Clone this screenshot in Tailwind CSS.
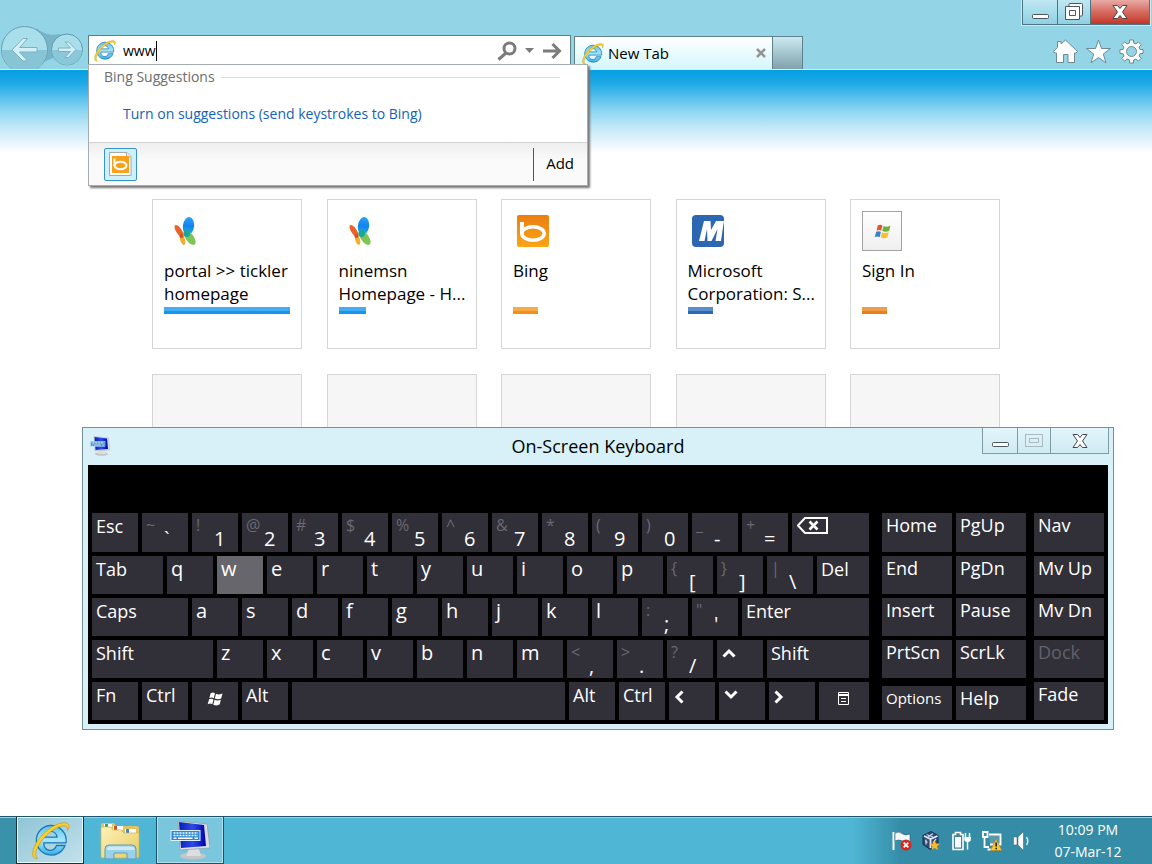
<!DOCTYPE html>
<html lang="en">
<head>
    <meta charset="UTF-8">
    <meta name="viewport" content="width=device-width, initial-scale=1.0">
    <title>New Tab</title>
    <script src="https://cdn.jsdelivr.net/npm/@tailwindcss/browser@4"></script>
</head>
<body class="relative flex h-screen flex-col overflow-hidden bg-white font-['Open_Sans',sans-serif] text-sm text-black">

    <!-- shared icons -->
    <svg class="absolute size-0" aria-hidden="true">
        <defs>
            <linearGradient id="ieBlue" x1="0" y1="0" x2="0" y2="1">
                <stop offset="0" stop-color="#5cc4ee"/>
                <stop offset=".5" stop-color="#a5e6fb"/>
                <stop offset="1" stop-color="#37aee6"/>
            </linearGradient>
            <linearGradient id="bingOrange" x1="0" y1="0" x2="0" y2="1">
                <stop offset="0" stop-color="#e97e12"/>
                <stop offset="1" stop-color="#fda516"/>
            </linearGradient>
            <linearGradient id="folderYellow" x1="0" y1="0" x2="1" y2="1">
                <stop offset="0" stop-color="#fdf2b8"/>
                <stop offset="1" stop-color="#e9cb62"/>
            </linearGradient>
            <linearGradient id="screenBlue" x1="0" y1="0" x2="1" y2="0">
                <stop offset="0" stop-color="#0a1fb0"/>
                <stop offset=".5" stop-color="#2c4be6"/>
                <stop offset="1" stop-color="#0000a8"/>
            </linearGradient>
            <linearGradient id="msnBlue" x1="0" y1="0" x2="0" y2="1">
                <stop offset="0" stop-color="#2ba4f5"/>
                <stop offset=".5" stop-color="#1183ee"/>
                <stop offset="1" stop-color="#22b6d6"/>
            </linearGradient>
        </defs>
        <symbol id="ie" viewBox="0 0 40 40">
            <path d="M20.500 5.500A14.800 14.800 0 1 0 35 25.500H26.500A6.500 6.500 0 0 1 13.800 22.800H36A15 15 0 0 0 20.500 5.500ZM13.900 17.200A6.600 6.600 0 0 1 27 17.200Z" fill="url(#ieBlue)" stroke="#1b78b4" stroke-width="1.300" fill-rule="evenodd"/>
            <path d="M7.500 38.500C0 39.500 1.500 28 10 17.500 19 6.500 32 .5 37.500 3.500 39.800 5 39 8 37.500 10.500 37.800 7 36.500 5.600 33.500 5.800 27 6.300 17.500 13 11.500 21 5.500 29 4 35.500 7.500 38.500Z" fill="#fbcf2f" stroke="#c99a12" stroke-width=".7"/>
        </symbol>
        <symbol id="bing" viewBox="0 0 32 32">
            <rect width="32" height="32" rx="2" fill="url(#bingOrange)"/>
            <path d="M5 7V19" stroke="#fff" stroke-width="4" fill="none"/>
            <ellipse cx="16" cy="18.500" rx="11.200" ry="6.800" fill="none" stroke="#fff" stroke-width="3.500"/>
        </symbol>
        <symbol id="msn" viewBox="0 0 22 28">
            <ellipse cx="5" cy="14" rx="2.800" ry="7" transform="rotate(-33 5 14)" fill="#e8622a"/>
            <ellipse cx="8.500" cy="22.500" rx="2.400" ry="5.600" transform="rotate(-16 8.500 22.500)" fill="#f3ae30"/>
            <ellipse cx="14.500" cy="9" rx="5.600" ry="9" transform="rotate(7 14.500 9)" fill="url(#msnBlue)"/>
            <ellipse cx="16" cy="21" rx="4" ry="8" transform="rotate(-35 16 21)" fill="#7fc456"/>
            <ellipse cx="12.700" cy="16.500" rx="3.300" ry="3.600" fill="#17a898"/>
            <circle cx="7.500" cy="19" r="2" fill="#dc4a26"/>
        </symbol>
        <symbol id="winflag" viewBox="0 0 16 14">
            <path d="M3.600 1.200C5.200.3 6.700.4 8 1.300L6.800 6.300C5.500 5.400 4 5.300 2.400 6.200Z" class="fill-[var(--a,#fff)]"/>
            <path d="M9 1.800C10.700 2.700 12.500 2.700 15.500 1.500L14.200 6.600C12 7.700 9.800 7.500 7.800 6.600Z" class="fill-[var(--b,#fff)]"/>
            <path d="M2.100 7.300C3.700 6.400 5.300 6.500 6.500 7.400L5.300 12.300C4 11.400 2.500 11.400.7 12.200Z" class="fill-[var(--c,#fff)]"/>
            <path d="M7.500 7.800C9.400 8.700 11.500 8.700 13.900 7.700L12.600 12.600C10.500 13.700 8.300 13.600 6.300 12.700Z" class="fill-[var(--d,#fff)]"/>
        </symbol>
        <symbol id="osk" viewBox="0 0 40 40">
            <ellipse cx="23" cy="36" rx="13" ry="3.500" fill="#c4c6c8"/>
            <path d="M19 29H29L31 36H16Z" fill="#dedede"/>
            <path d="M8 1L37 4 40 28 10 30Z" fill="#d9dde2" stroke="#8b929c" stroke-width=".6"/>
            <path d="M9 2L34 5 36 26 11 28Z" fill="url(#screenBlue)"/>
            <rect x="1" y="10.500" width="29" height="10" fill="#2c87d2" stroke="#d9f0ff"/>
            <path d="M3.500 13H28M3.500 15.500H28" stroke="#fff" stroke-width="1.500" stroke-dasharray="2 1"/>
            <path d="M3.500 18.200H6.500M8 18.200H22.500M24.500 18.200H28" stroke="#fff" stroke-width="1.500"/>
        </symbol>
    </svg>

    <!-- browser frame -->
    <header class="relative flex h-[70px] shrink-0 items-end overflow-hidden border-b border-[#d5f1f8] bg-[#93d4e6]">
        <svg class="h-[43px] w-[88px] shrink-0" viewBox="0 0 88 43">
            <path d="M36 2C44 8 50 10 60 8L70 24 44 36Z" fill="#76b4c8"/>
            <circle cx="24.500" cy="23.500" r="23" fill="#a9deeb" stroke="#6a9fb0"/>
            <path d="M2 24A22.500 22.500 0 0 0 47 24Z" fill="#86c4d6"/>
            <circle cx="67" cy="23.500" r="15.500" fill="#a9deeb" stroke="#5f9aae"/>
            <path d="M52 24A15 15 0 0 0 82 24Z" fill="#8ac8d9"/>
            <path d="M12 24L23 12.500H27.500L19.500 21.500H37V26H19.500L27.500 35H23Z" fill="#d4f0f7" stroke="#7fb0c0"/>
            <path d="M76 23.500L68.500 16H65L70.500 22H58.500V25.500H70.500L65 31.500H68.500Z" fill="#d4f0f7" stroke="#7fb0c0"/>
        </svg>
        <div class="mb-[3px] flex h-[31px] w-[483px] items-center border border-[#5f7f8a] bg-white">
            <svg class="ml-1 size-[23px]"><use href="#ie"/></svg>
            <input type="text" aria-label="Address" value="www" class="ml-[7px] field-sizing-content outline-none">
            <span class="h-5 w-px bg-black"></span>
            <div class="mr-2 ml-auto flex items-center gap-2 text-[#7b7b7b]">
                <button aria-label="Search"><svg class="size-5" viewBox="0 0 20 20" fill="none" stroke="currentColor" stroke-width="3"><circle cx="12.500" cy="7.500" r="5.500"/><path d="M9 12L1.500 18.500"/></svg></button>
                <button aria-label="Show address list"><svg class="h-[5px] w-[9px]" viewBox="0 0 9 5" fill="currentColor"><path d="M0 0H9L4.500 5Z"/></svg></button>
                <button aria-label="Go"><svg class="h-4 w-5" viewBox="0 0 20 16" fill="none" stroke="currentColor" stroke-width="3"><path d="M1 8H17M10.500 1L17.500 8 10.500 15"/></svg></button>
            </div>
        </div>
        <div class="ml-[3px] flex h-[33px] w-[199px] items-center border border-b-0 border-[#5f7f8a] bg-linear-to-b from-white to-[#d3f6fc] pl-1.5">
            <svg class="size-[23px]"><use href="#ie"/></svg>
            <span class="mt-0.5 ml-1 text-[15px]">New Tab</span>
            <button aria-label="Close tab" class="mr-1.5 ml-auto"><svg class="size-[10px]" viewBox="0 0 10 10" stroke="#949494" stroke-width="2.500"><path d="M1 1L9 9M9 1L1 9"/></svg></button>
        </div>
        <button aria-label="New tab" class="h-[33px] w-[30px] border border-b-0 border-l-0 border-[#5f7f8a] bg-linear-to-b from-[#cdeaf2] to-[#7fa2ab]"></button>
        <nav class="mr-2 mb-[5px] ml-auto flex gap-2 text-white">
            <button aria-label="Home"><svg class="size-[25px]" viewBox="0 0 25 25" fill="currentColor" stroke="#6c8b96"><path d="M12.500 1L24.500 12.500 23 14H21.500V23.500H15V15.500H10.500V23.500H3.500V14H2L.5 12.500 4.500 8.500V2.500H8V5Z"/></svg></button>
            <button aria-label="Favorites"><svg class="size-[25px]" viewBox="0 0 25 25" fill="currentColor" stroke="#6c8b96"><path d="M12.500 1L15.500 9.500H24.500L17.300 15 20 23.800 12.500 18.500 5 23.800 7.700 15 .5 9.500H9.500Z"/></svg></button>
            <button aria-label="Tools"><svg class="size-[25px]" viewBox="0 0 25 25" fill="currentColor" stroke="#6c8b96"><path fill-rule="evenodd" d="M10.500 1H14.500V4L17 5 19.300 2.800 22.200 5.700 20 8 21 10.500H24V14.500H21L20 17 22.200 19.300 19.300 22.200 17 20 14.500 21V24H10.500V21L8 20 5.700 22.200 2.800 19.300 5 17 4 14.500H1V10.500H4L5 8 2.800 5.700 5.700 2.800 8 5 10.500 4ZM12.500 7.500A5 5 0 1 0 12.500 17.500 5 5 0 1 0 12.500 7.500Z"/></svg></button>
        </nav>
        <div class="absolute top-0 right-[2px] flex h-[25px] border border-t-0 border-[#4f7482] outline outline-[#c8ebf4]">
            <button aria-label="Minimize" class="flex w-[35px] items-center justify-center border-r border-[#4f7482] bg-linear-to-b from-[#bfe8f2] to-[#8fd0e2]"><svg class="mt-2 h-[5px] w-[17px]" viewBox="0 0 17 5"><rect x=".5" y=".5" width="16" height="4" rx="1" fill="#fff" stroke="#4a5660"/></svg></button>
            <button aria-label="Restore" class="flex w-[33px] items-center justify-center border-r border-[#4f7482] bg-linear-to-b from-[#bfe8f2] to-[#8fd0e2]"><svg class="mb-0.5 h-[17px] w-[18px]" viewBox="0 0 18 17" fill="#fff" stroke="#4a5660"><rect x="4" y=".5" width="13.500" height="12.500" rx="1"/><path fill-rule="evenodd" d="M.5 3.500H14.500V16.500H.5ZM4.500 7.500V12.500H10.500V7.500Z"/></svg></button>
            <button aria-label="Close" class="flex w-[58px] items-center justify-center bg-linear-to-b from-[#e8aaa5] via-[#d5695f] to-[#c23526]"><svg class="h-[14px] w-4" viewBox="0 0 16 14" fill="#fff" stroke="#4a4450"><path d="M1 .5H5.500L8 3.500 10.500 .5H15L10.500 7 15 13.500H10.500L8 10.500 5.500 13.500H1L5.500 7Z"/></svg></button>
        </div>
    </header>

    <!-- page -->
    <main class="flex-1 overflow-hidden bg-[linear-gradient(#049fe3_0px,#20aae6_14px,#8ad4f2_40px,#c9ebf9_60px,#fff_83px)] pt-[129px]">
        <div class="mx-auto flex max-w-[848px] flex-col gap-[25px]">
            <div id="sites" class="flex justify-between"></div>
            <div class="flex justify-between *:h-[150px] *:w-[150px] *:border *:border-[#d6d6d6] *:bg-[#f6f6f6]">
                <div></div><div></div><div></div><div></div><div></div>
            </div>
        </div>
    </main>

    <!-- address bar suggestions -->
    <section class="absolute top-[64px] left-[88px] w-[500px] border border-[#a5adb0] bg-white shadow-[2px_2px_2px_#777]">
        <h2 class="flex h-6 items-center gap-1.5 pr-[27px] pl-[15px] text-[#6d6d6d] after:h-px after:flex-1 after:bg-[#dcdcdc]">Bing Suggestions</h2>
        <div class="flex h-[53px] items-center pl-[34px]">
            <a href="#" class="pb-1 text-[#1362ba]">Turn on suggestions (send keystrokes to Bing)</a>
        </div>
        <div class="flex h-[43px] items-center border-t border-[#d2d2d2] bg-linear-to-b from-[#eee] to-[#fafafa] to-40% pr-[13px] pl-[15px]">
            <button aria-label="Bing" class="flex size-[33px] items-center justify-center rounded-xs border border-[#3594c4] bg-[#d0effb]">
                <svg class="h-6 w-[23px]" viewBox="0 0 23 24"><path d="M.5 .5H18L22 4.500V23.500H.5Z" fill="#fff" stroke="#a3a8aa"/><path d="M17.500 .5V5H22" fill="#eee" stroke="#a3a8aa"/><rect x="3" y="4" width="17" height="17" fill="#f9a01b"/><path d="M5.500 6.500V14" stroke="#fff" stroke-width="2"/><ellipse cx="11.500" cy="13.500" rx="6" ry="3.800" fill="none" stroke="#fff" stroke-width="2"/></svg>
            </button>
            <span class="mr-3 ml-auto h-[33px] w-px bg-[#555]"></span>
            <button class="text-[15px]">Add</button>
        </div>
    </section>

    <!-- on-screen keyboard window -->
    <section class="absolute top-[427px] right-[38px] left-[82px] border border-[#74909b] bg-[#d8f1f8] px-[5px] pb-[5px]">
        <div class="relative flex h-[37px] items-center justify-center">
            <svg class="absolute top-2 left-0.5 size-5"><use href="#osk"/></svg>
            <h1 class="pb-0.5 text-lg">On-Screen Keyboard</h1>
            <div class="absolute top-0 -right-px flex h-[26px] border border-t-0 border-[#7f9ba5] bg-linear-to-b from-[#e2f6fb] to-[#cfeaf2]">
                <button aria-label="Minimize" class="flex w-[35px] items-center justify-center border-r border-[#7f9ba5]"><svg class="mt-2 h-[5px] w-[17px]" viewBox="0 0 17 5"><rect x=".5" y=".5" width="16" height="4" rx="1" fill="#fff" stroke="#4a5660"/></svg></button>
                <button aria-label="Maximize" disabled class="flex w-[33px] items-center justify-center border-r border-[#7f9ba5]"><svg class="h-[13px] w-[18px]" viewBox="0 0 18 13" fill="none" stroke="#a9bac0"><rect x=".5" y=".5" width="17" height="12"/><rect x="4.500" y="4.500" width="9" height="4"/></svg></button>
                <button aria-label="Close" class="flex w-[57px] items-center justify-center"><svg class="h-[14px] w-4" viewBox="0 0 16 14" fill="#fff" stroke="#4a4450"><path d="M1 .5H5.500L8 3.500 10.500 .5H15L10.500 7 15 13.500H10.500L8 10.500 5.500 13.500H1L5.500 7Z"/></svg></button>
            </div>
        </div>
        <div class="flex bg-black px-1 pt-[48px] pb-1">
            <div id="keys" class="flex flex-1 flex-col gap-1"></div>
            <div id="navKeys" class="ml-[13px] grid w-[144px] grid-cols-2 grid-rows-[39px_38px_38px_38px_38px] gap-1"></div>
            <div id="sideKeys" class="ml-2 grid w-[70px] grid-rows-[39px_38px_38px_38px_38px] gap-1"></div>
        </div>
    </section>

    <!-- taskbar -->
    <footer class="flex h-12 shrink-0 border-t border-[#1f5468] bg-[linear-gradient(90deg,#3a91aa_16px,#50b6d5_16px,#50b6d5_calc(100%-300px),#348ca6_calc(100%-250px))] inset-shadow-[0_1px_#8fd3e6]">
        <button aria-label="Internet Explorer" class="ml-4 flex w-[68px] items-center justify-center border border-t-0 border-[#16323d] bg-linear-to-br from-[#8fc4d6] to-[#c3e2ec] inset-ring inset-ring-[#e6f6fa]"><svg class="size-10"><use href="#ie"/></svg></button>
        <button aria-label="File Explorer" class="flex w-[72px] items-center justify-center">
            <svg class="h-[38px] w-10" viewBox="0 0 40 38">
                <path d="M1 34V3Q1 1 3 1H14L16 4H37Q39 4 39 6V34Q39 36 37 36H3Q1 36 1 34Z" fill="#e3c262"/>
                <path d="M4 2H12V5H4ZM13 4H23V8H13ZM25 7H36V11H25Z" fill="#fff"/>
                <path d="M5 2H8V5H5Z" fill="#3ba348"/><path d="M14 4H17V8H14Z" fill="#d4502f"/><path d="M26 7H29V11H26Z" fill="#3987ce"/>
                <path d="M1 10V5H11L13 8H21L24 11H39V34Q39 36 37 36H3Q1 36 1 34Z" fill="url(#folderYellow)" stroke="#d3b252" stroke-width=".7"/>
                <path d="M5 37V27Q5 23 9 23H32Q36 23 36 27V37H27V31H14V37Z" fill="#9bd0ea" stroke="#5a9dbd"/>
                <path d="M6.500 28Q6.500 24.500 10 24.500H31Q34.500 24.500 34.500 28Z" fill="#cfeaf6"/>
            </svg>
        </button>
        <button aria-label="On-Screen Keyboard" class="flex w-[68px] items-center justify-center border border-t-0 border-[#1d5265] bg-[#7ac6dd] inset-ring inset-ring-[#b4e0ed]"><svg class="size-10"><use href="#osk"/></svg></button>
        <div class="ml-auto flex items-center gap-2.5">
            <svg class="size-5" viewBox="0 0 20 20"><path d="M1.500 1V19" stroke="#fff" stroke-width="2"/><path d="M3 2Q7 0 10 2.500T18 3V11Q14 12 10.500 10T3 10Z" fill="#f2fafc" stroke="#2b5a68" stroke-width=".6"/><circle cx="14" cy="14" r="5.500" fill="#d9261c"/><path d="M11.700 11.700L16.300 16.300M16.300 11.700L11.700 16.300" stroke="#fff" stroke-width="1.800"/></svg>
            <svg class="size-5" viewBox="0 0 20 20"><path d="M1 4.500L9 .5 16 4.500V13.500L8.500 18.500 1 13.500Z" fill="#2e4b78" stroke="#1b2c4b"/><path d="M2 5L8.500 8 15.500 5M8.500 8V17" stroke="#e3ecf6" stroke-width="1.800" fill="none"/><path d="M4.500 3.500L11 6M11 2.500L6 6M4 8.500V13.500M5.500 11.500L3 9.500M11 12L14 8" stroke="#c5d4e6" stroke-width="1.300"/><path d="M12.500 9L14 12.500 18 12.700 15 15.200 16 19 12.500 17 9.500 19 10.300 15.200 7.500 12.700 11.200 12.500Z" fill="#fdb92c"/></svg>
            <svg class="size-5" viewBox="0 0 20 20"><path d="M1 3.500H3.500V1.500H8.500V3.500H11V18.500H1Z" fill="#4b8193" stroke="#fff" stroke-width="1.600"/><path d="M3 6H9V16.500H3Z" fill="#f4fbfd"/><path d="M13.500 2V6M17.500 2V6M15.500 10V18.500" stroke="#fff" stroke-width="1.500"/><path d="M12.200 6H19V8Q19 11 15.500 11T12.200 8Z" fill="#fff"/></svg>
            <svg class="size-5" viewBox="0 0 20 20"><path d="M7 3.500H18.500V13.500H8" fill="#5c98aa" stroke="#fff" stroke-width="1.800"/><path d="M1 1H5.500V6H1ZM2.500 6V16H7M5.500 18.500H12" fill="none" stroke="#fff" stroke-width="1.800"/><path d="M14 8L20 19.500H8.500Z" fill="#fdc62e" stroke="#a87a10" stroke-width=".6"/><path d="M14.200 11.500V15.500M14.200 16.700V18.300" stroke="#222" stroke-width="1.600"/></svg>
            <svg class="size-5" viewBox="0 0 20 20"><path d="M1.500 6H5V14H1.500ZM6 6L11.500 .5V19.500L6 14Z" fill="#fff" stroke="#2b5a68" stroke-width=".5"/><path d="M14.500 6Q17 10 14.500 14" stroke="#d2ecf3" stroke-width="1.500" fill="none"/></svg>
        </div>
        <div class="mr-6 ml-4 w-[80px] pt-0.5 text-center leading-[22px] whitespace-nowrap text-white">
            <p>10:09 PM</p>
            <p>07-Mar-12</p>
        </div>
    </footer>

    <script>
        const sites = [
            { name: ['portal >> tickler', 'homepage'], icon: '<svg class="mt-1.5 ml-2.5 h-7 w-[22px]"><use href="#msn"/></svg>', bar: 'w-full bg-linear-to-b from-[#42adf4] from-55% to-[#1795ee] to-55%' },
            { name: ['ninemsn', 'Homepage - H...'], icon: '<svg class="mt-1.5 ml-2.5 h-7 w-[22px]"><use href="#msn"/></svg>', bar: 'w-[27px] bg-linear-to-b from-[#42adf4] from-55% to-[#1795ee] to-55%' },
            { name: ['Bing'], icon: '<svg class="m-1 size-8"><use href="#bing"/></svg>', bar: 'w-[25px] bg-linear-to-b from-[#f6ab45] from-55% to-[#f28f14] to-55%' },
            { name: ['Microsoft', 'Corporation: S...'], icon: '<svg class="m-1 size-8" viewBox="0 0 32 32"><rect width="32" height="32" rx="4" fill="#2d66b1"/><path d="M7 26L12 6H18.500L19 15 24 6H32L31 12 29 26H23.500L25.500 14 19.500 26H15.500L15 14 12.500 26Z" fill="#fff"/></svg>', bar: 'w-[25px] bg-linear-to-b from-[#5a8dcb] from-55% to-[#2d68b5] to-55%' },
            { name: ['Sign In'], icon: '<div class="flex size-10 items-center justify-center border border-[#a3a3a3] bg-linear-to-b from-white to-[#efefef]"><svg class="h-[15px] w-[17px] [--a:#dd5a2c] [--b:#6bb03c] [--c:#3a80ca] [--d:#f7c130]"><use href="#winflag"/></svg></div>', bar: 'w-[25px] bg-linear-to-b from-[#ee9c4c] from-55% to-[#ea7f1b] to-55%' },
        ];

        document.getElementById('sites').innerHTML = sites.map(site => `
            <a href="#" class="flex h-[150px] w-[150px] flex-col border border-[#d6d6d6] bg-white p-[11px] text-[17px] leading-[23px]">
                <div class="flex h-10 items-start">${site.icon}</div>
                <div class="mt-2 h-12 whitespace-nowrap">${site.name.join('<br>')}</div>
                <div class="h-[7px] ${site.bar}"></div>
            </a>`).join('');

        const icons = {
            back: '<svg class="h-[17px] w-[31px]" viewBox="0 0 31 17" fill="none" stroke="#fff" stroke-width="2"><path d="M8 1H30V16H8L1 8.500Z"/><path d="M12.500 4.500L20.500 12.500M20.500 4.500L12.500 12.500" stroke-width="2.600"/></svg>',
            up: '<svg class="mt-1 h-[10px] w-[14px]" viewBox="0 0 14 10" fill="none" stroke="#fff" stroke-width="3"><path d="M1.500 8.500L7 3 12.500 8.500"/></svg>',
            down: '<svg class="mt-1 h-[10px] w-[14px]" viewBox="0 0 14 10" fill="none" stroke="#fff" stroke-width="3"><path d="M1.500 1.500L7 7 12.500 1.500"/></svg>',
            left: '<svg class="mt-1 h-[14px] w-[10px]" viewBox="0 0 10 14" fill="none" stroke="#fff" stroke-width="3"><path d="M8.500 1.500L3 7 8.500 12.500"/></svg>',
            right: '<svg class="mt-1 h-[14px] w-[10px]" viewBox="0 0 10 14" fill="none" stroke="#fff" stroke-width="3"><path d="M1.500 1.500L7 7 1.500 12.500"/></svg>',
            win: '<svg class="mt-1.5 ml-2.5 h-[14px] w-4"><use href="#winflag"/></svg>',
            menu: '<svg class="mt-1.5 ml-3.5 h-[13px] w-[11px]" viewBox="0 0 11 13" fill="none" stroke="#fff"><path d="M.5 .5H10.500V12.500H.5Z"/><path d="M0 3H11" stroke-width="2"/><path d="M3 6.500H8M3 9.500H8"/></svg>',
        };

        // plain string: one key; [label, width]: wide key; { s, k }: shifted and normal symbol; { icon }: drawn key
        const rows = [
            ['Esc', { s: '~', k: '`' }, { s: '!', k: '1' }, { s: '@', k: '2' }, { s: '#', k: '3' }, { s: '$', k: '4' }, { s: '%', k: '5' }, { s: '^', k: '6' }, { s: '&amp;', k: '7' }, { s: '*', k: '8' }, { s: '(', k: '9' }, { s: ')', k: '0' }, { s: '_', k: '-' }, { s: '+', k: '=' }, { icon: 'back', w: 'flex-1' }],
            [['Tab', 'w-[71px]'], 'q', 'w', 'e', 'r', 't', 'y', 'u', 'i', 'o', 'p', { s: '{', k: '[' }, { s: '}', k: ']' }, { s: '|', k: '\\' }, ['Del', 'flex-1']],
            [['Caps', 'w-24'], 'a', 's', 'd', 'f', 'g', 'h', 'j', 'k', 'l', { s: ':', k: ';' }, { s: '"', k: "'" }, ['Enter', 'flex-1']],
            [['Shift', 'w-[121px]'], 'z', 'x', 'c', 'v', 'b', 'n', 'm', { s: '&lt;', k: ',' }, { s: '&gt;', k: '.' }, { s: '?', k: '/' }, { icon: 'up' }, ['Shift', 'flex-1']],
            ['Fn', 'Ctrl', { icon: 'win' }, 'Alt', ['', 'flex-1'], 'Alt', 'Ctrl', { icon: 'left' }, { icon: 'down' }, { icon: 'right' }, { icon: 'menu', w: 'w-[50px]' }],
        ];

        function keyButton(key) {
            if (key.icon) {
                return `<button aria-label="${key.icon}" class="flex items-start bg-[#312f38] px-[5px] pt-1 ${key.w || 'w-[46px]'}">${icons[key.icon]}</button>`;
            }
            if (key.k) {
                return `<button class="grid w-[46px] grid-cols-[18px_1fr] bg-[#312f38] px-1 text-left">
                    <span class="text-base leading-6 text-[#6b6a72]">${key.s}</span>
                    <span class="pt-3.5 text-xl leading-6 text-white">${key.k}</span>
                </button>`;
            }
            const [label, width] = Array.isArray(key) ? key : [key, 'w-[46px]'];
            const size = label.length === 1 ? 'text-xl' : 'text-lg';
            const color = label === 'w' ? 'bg-[#67666c]' : 'bg-[#312f38]';
            return `<button aria-label="${label || 'Space'}" class="flex items-start px-1 pt-px text-left text-white ${size} ${color} ${width}"><span class="leading-6">${label}</span></button>`;
        }

        document.getElementById('keys').innerHTML = rows.map((row, i) =>
            `<div class="flex gap-1 ${i === 0 ? 'h-[39px]' : 'h-[38px]'}">${row.map(keyButton).join('')}</div>`).join('');

        const sideButton = (label) => {
            const size = label === 'Options' ? 'text-[15px] mt-1' : label === 'Help' ? 'text-lg mt-1' : 'text-lg';
            const color = label === 'Dock' ? 'text-[#62616a]' : 'text-white';
            return `<button class="flex items-start bg-[#312f38] px-1 whitespace-nowrap ${size} ${color}"><span class="leading-6">${label}</span></button>`;
        };

        document.getElementById('navKeys').innerHTML =
            ['Home', 'PgUp', 'End', 'PgDn', 'Insert', 'Pause', 'PrtScn', 'ScrLk', 'Options', 'Help'].map(sideButton).join('');
        document.getElementById('sideKeys').innerHTML =
            ['Nav', 'Mv Up', 'Mv Dn', 'Dock', 'Fade'].map(sideButton).join('');
    </script>
</body>
</html>
